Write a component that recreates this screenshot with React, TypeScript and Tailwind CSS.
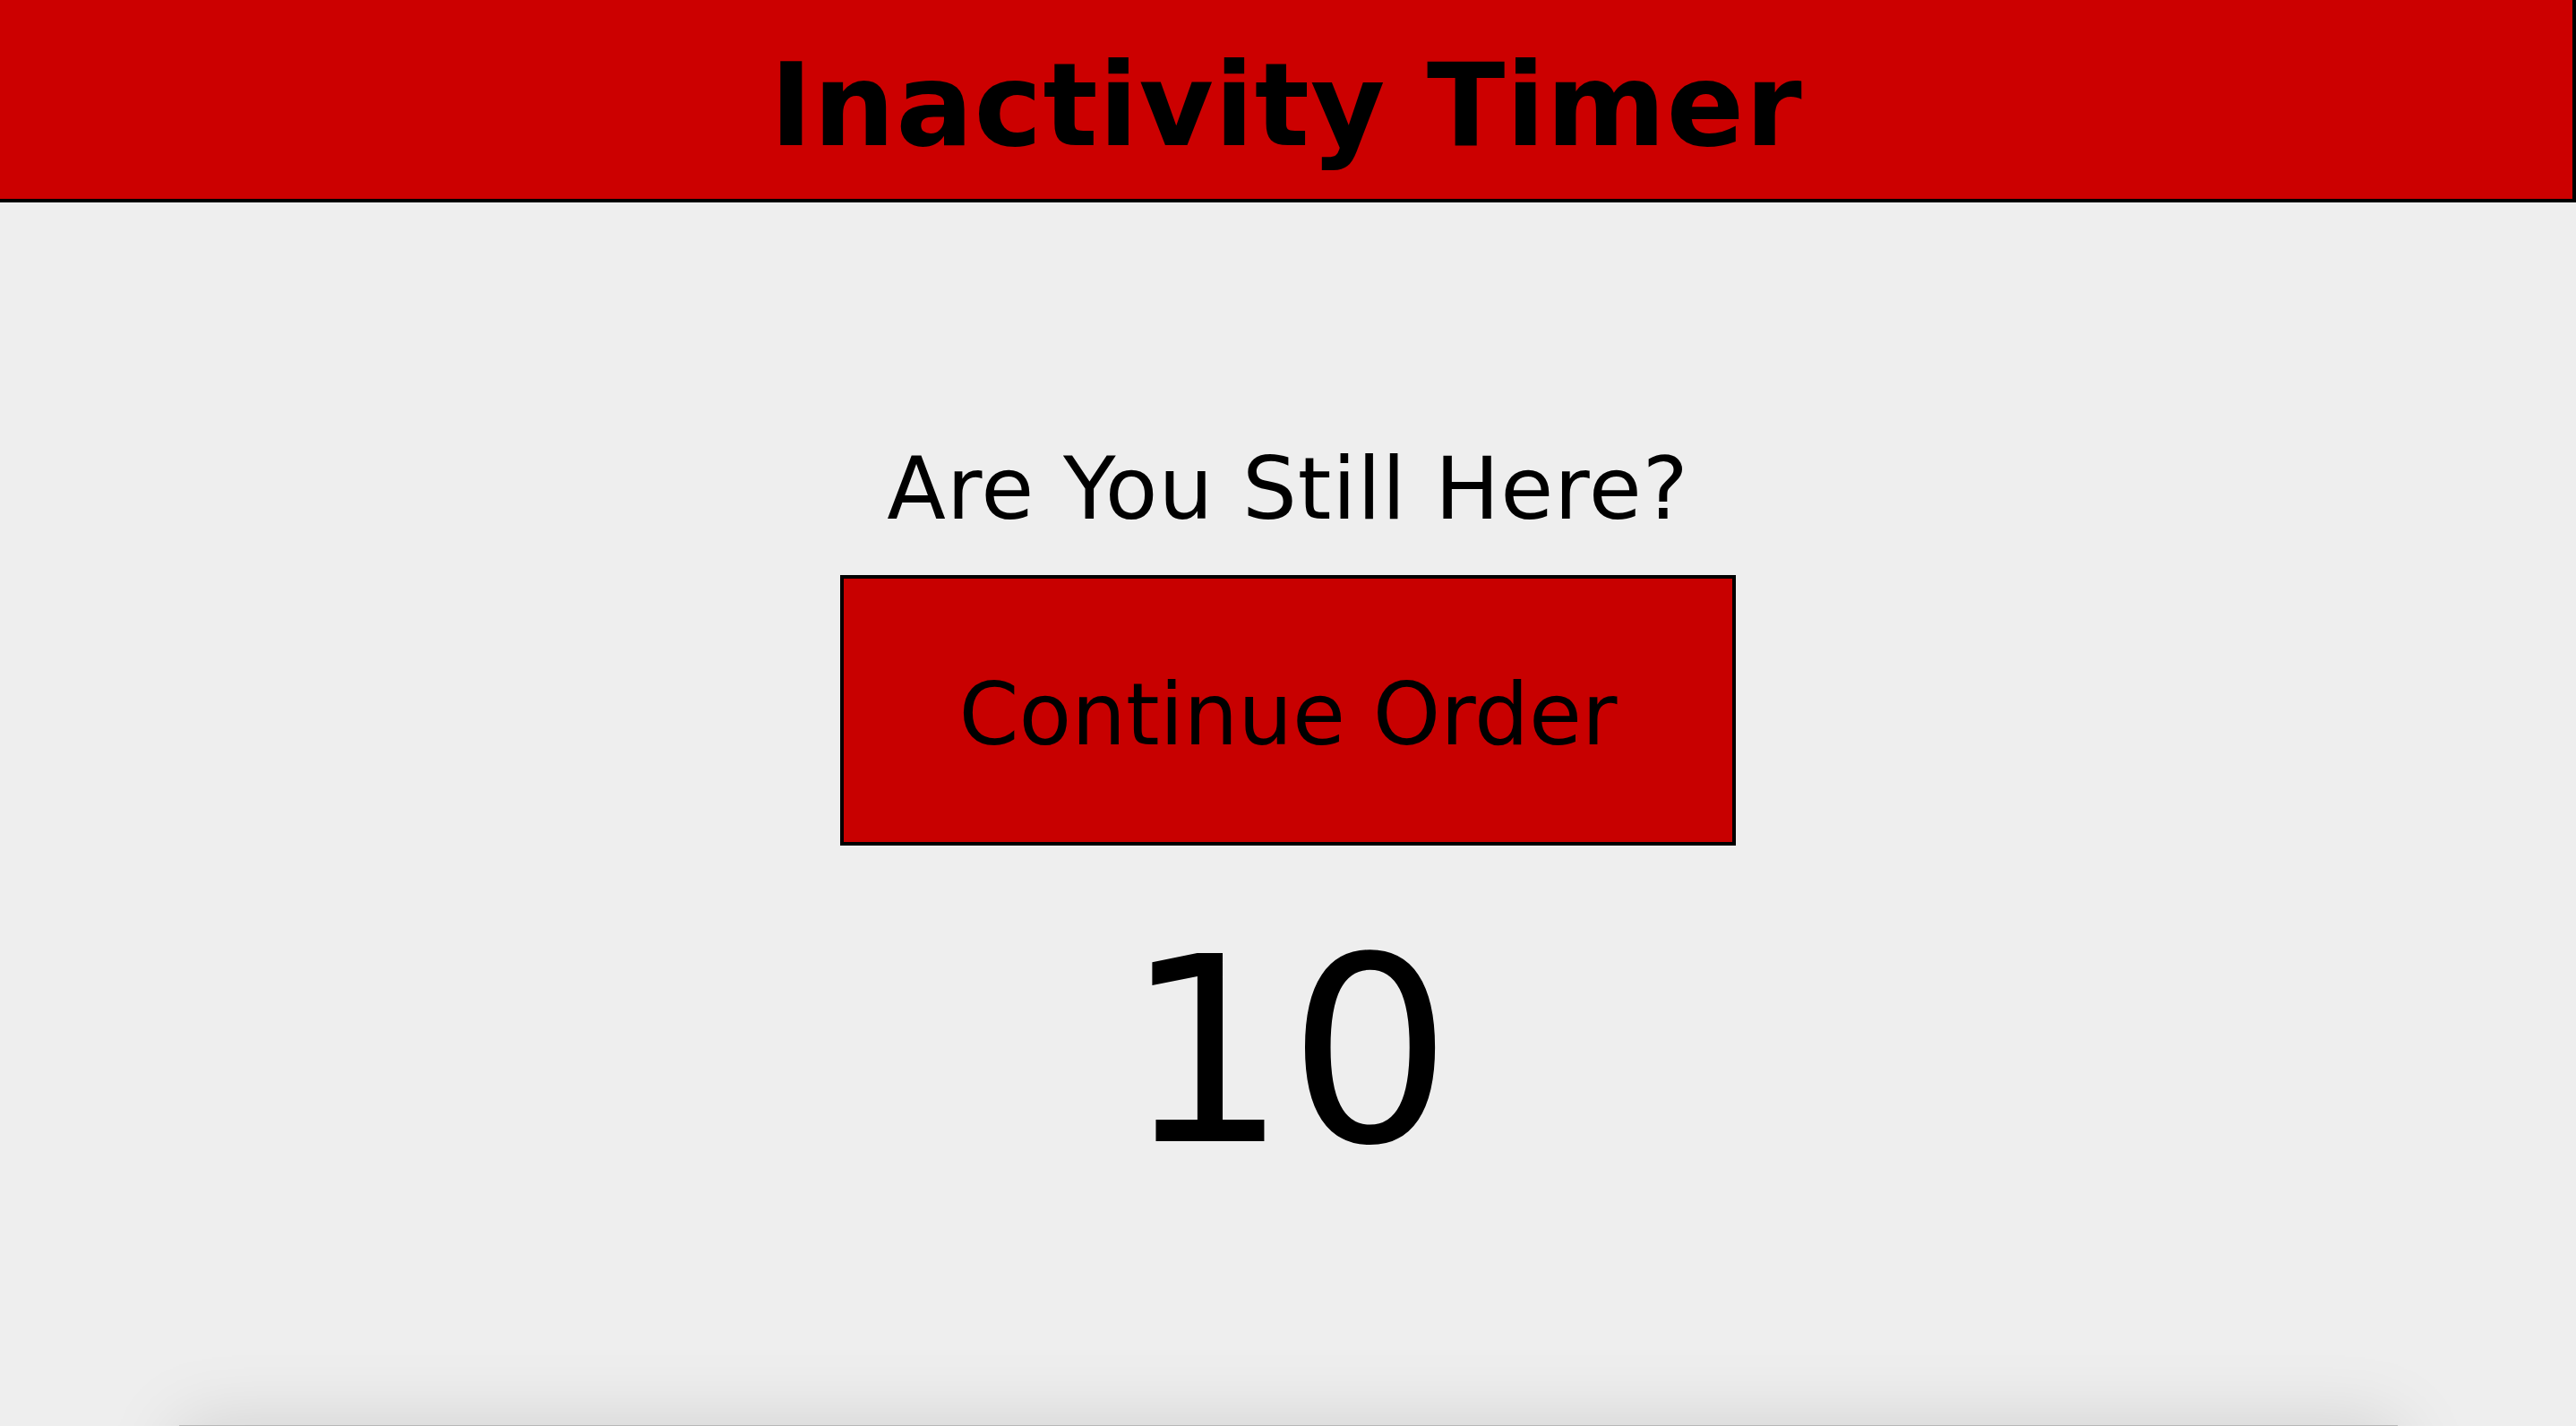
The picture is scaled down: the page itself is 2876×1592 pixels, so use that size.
import React from "react";

export default function App() {
  return (
    <div
      className="h-[1592px] w-full overflow-hidden bg-[#eeeeee] text-black"
      style={{ fontFamily: '"DejaVu Sans", Verdana, sans-serif' }}
    >
      <header className="h-[226px] w-full border-b-4 border-r-4 border-black bg-[#cc0000] pt-[43px] text-center">
        <h1 className="text-[128px] font-bold leading-[149px] tracking-[1px]">Inactivity Timer</h1>
      </header>

      <main className="flex flex-col items-center">
        <p className="mt-[264px] text-[96px] leading-[112px] tracking-[1px]">Are You Still Here?</p>
        <button
          type="button"
          className="mt-[40px] flex h-[302px] w-[1000px] items-center justify-center border-4 border-black bg-[#c80000] pt-[10px] text-[96px] leading-[112px] text-black"
        >
          Continue Order
        </button>
        <div className="mt-[63px] text-[288px] leading-[335px]">10</div>
      </main>

      <footer className="mx-auto mt-[249px] h-[300px] w-[2477px] border-t border-[#b8b8b8] bg-[#eeeeee] shadow-[0_0_80px_rgba(0,0,0,0.13)]" />
    </div>
  );
}
